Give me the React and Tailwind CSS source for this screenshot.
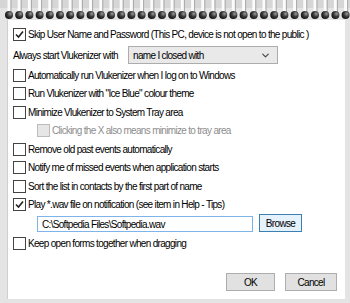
import { ChevronDown } from "lucide-react";

const font = { fontFamily: '"Liberation Sans", Arial, sans-serif' };

function Box({ checked, disabled }) {
  return (
    <span
      className={`flex h-[13px] w-[13px] shrink-0 items-center justify-center border ${
        disabled ? "border-[#bcbcbc] bg-[#e6e6e6]" : "border-[#444] bg-white"
      }`}
    >
      {checked && (
        <svg width="9" height="9" viewBox="0 0 9 9">
          <path d="M1 4.5 L3.5 7 L8 1.5" fill="none" stroke="#222" strokeWidth="1.6" />
        </svg>
      )}
    </span>
  );
}

function Row({ label, checked, disabled, indent, className = "" }) {
  return (
    <div className={`flex h-[18.5px] items-center gap-[2px] whitespace-nowrap ${indent ? "pl-[29px]" : "pl-[5px]"} ${className}`}>
      <Box checked={checked} disabled={disabled} />
      <span className={disabled ? "text-[#8d8d8d]" : "text-black"}>{label}</span>
    </div>
  );
}

function Rings() {
  const rings = Array.from({ length: 35 }, (_, i) => 9 + i * 10.2);
  return (
    <svg width="350" height="22" className="block">
      <defs>
        <radialGradient id="rg" cx="0.65" cy="0.35" r="0.7">
          <stop offset="0" stopColor="#9a9a9a" />
          <stop offset="0.5" stopColor="#3a3a3a" />
          <stop offset="1" stopColor="#111" />
        </radialGradient>
      </defs>
      <rect width="350" height="22" fill="#e4e4e4" />
      <rect x="0" y="0" width="350" height="8" fill="#d6d6d6" />
      {rings.map((x) => (
        <g key={x}>
          <rect x={x - 1.5} y="0" width="3" height="12" fill="#fbfbfb" />
          <rect x={x + 1.5} y="0" width="1" height="12" fill="#a8a8a8" />
          <circle cx={x} cy="15" r="4" fill="url(#rg)" />
        </g>
      ))}
    </svg>
  );
}

export default function App() {
  return (
    <div className="relative h-[303px] w-[350px] overflow-hidden bg-[#e4e4e4]" style={font}>
      <Rings />
      <div className="absolute left-[7px] top-[20px] h-[279px] w-[338px] border-l border-[#cfcfcf] bg-white text-[10px] tracking-[-0.68px]">
        <div className="flex flex-col pt-[5px]">
          <Row label="Skip User Name and Password (This PC, device is not open to the public )" checked />
          <div className="mt-[2.5px] flex h-[18px] items-center whitespace-nowrap pl-[5px]">
            <span className="w-[115px]">Always start Vlukenizer with</span>
            <div className="flex h-[18px] w-[150px] items-center justify-between border border-[#acacac] bg-[#e9e9e9] pl-[4px] pr-[6px]">
              <span>name I closed with</span>
              <ChevronDown size={11} strokeWidth={2.5} className="text-[#444]" />
            </div>
          </div>
          <Row label="Automatically run Vlukenizer when I log on to Windows" className="mt-[2px]" />
          <Row label={'Run Vlukenizer with "Ice Blue" colour theme'} />
          <Row label="Minimize Vlukenizer to System Tray area" />
          <Row label="Clicking the X also means minimize to tray area" disabled indent />
          <Row label="Remove old past events automatically" />
          <Row label="Notify me of missed events when application starts" />
          <Row label="Sort the list in contacts by the first part of name" />
          <Row label="Play *.wav file on notification (see item in Help - Tips)" checked />
          <div className="flex h-[18px] items-end whitespace-nowrap pl-[29px]">
            <div className="flex h-[16px] w-[216px] items-center border border-[#7eb4ea] px-[4px]">
              C:\Softpedia Files\Softpedia.wav
            </div>
            <div className="ml-[6px] flex h-[18px] w-[43px] items-center justify-center border border-[#3c7fb1] bg-[#e5f1fb]">
              Browse
            </div>
          </div>
          <Row label="Keep open forms together when dragging" className="mt-[2px]" />
        </div>
        <div className="absolute right-[8px] top-[253px] flex gap-[10px]">
          <div className="flex h-[18px] w-[49px] items-center justify-center border border-[#adadad] bg-[#e1e1e1]">OK</div>
          <div className="flex h-[18px] w-[52px] items-center justify-center border border-[#adadad] bg-[#e1e1e1]">Cancel</div>
        </div>
      </div>
    </div>
  );
}
